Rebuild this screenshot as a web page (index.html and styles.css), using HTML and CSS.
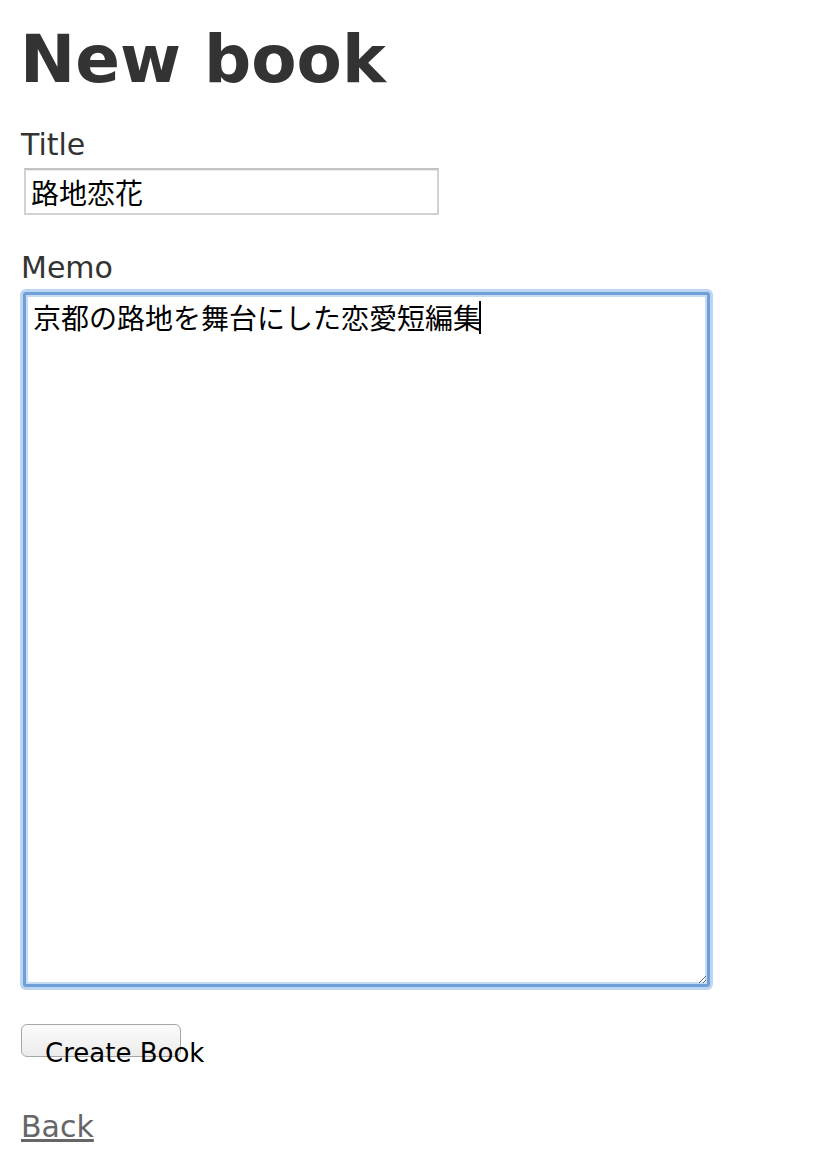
FILE: index.html
```html
<!DOCTYPE html>
<html lang="ja">
<head>
<meta charset="utf-8">
<title>New book</title>
<link rel="stylesheet" href="styles.css">
</head>
<body>
<h1 class="page-title">New book</h1>
<form class="book-form">
  <div class="field">
    <label class="field-label" for="book_title">Title</label>
    <input class="text-input" id="book_title" type="text" value="路地恋花">
  </div>
  <div class="field field-memo">
    <label class="field-label" for="book_memo">Memo</label>
    <div class="memo-wrap">
      <textarea class="memo-input" id="book_memo">京都の路地を舞台にした恋愛短編集</textarea>
      <span class="caret"></span>
    </div>
  </div>
  <div class="actions">
    <button class="submit-btn" type="button"><span class="submit-text">Create Book</span></button>
  </div>
</form>
<a class="back-link" href="#">Back</a>
</body>
</html>
```
FILE: styles.css
```css
html, body {
  margin: 0;
  padding: 0;
  background: #fff;
}
body {
  padding: 0 21px;
  font-family: "DejaVu Sans", Verdana, sans-serif;
  color: #333;
}
.page-title {
  margin: 20px 0 0 -1px;
  font-size: 66px;
  line-height: 80px;
  font-weight: bold;
  color: #333;
}
.book-form {
  margin: 0;
}
.field {
  display: flex;
  flex-direction: column;
  align-items: flex-start;
}
.field-label {
  margin-top: 27px;
  font-size: 30px;
  line-height: 36px;
  color: #333;
}
.field-memo .field-label {
  margin-top: 35px;
}
.text-input {
  box-sizing: border-box;
  margin: 5px 0 0 3px;
  width: 415px;
  height: 47px;
  padding: 0 5px;
  border: 2px solid #d2d2d2;
  border-top-color: #c2c2c2;
  box-shadow: inset 0 1px 0 #ececec;
  font-family: "Noto Sans CJK JP", sans-serif;
  font-size: 28px;
  color: #000;
  outline: none;
  background: #fff;
}
.memo-wrap {
  position: relative;
  margin: 6px 0 0 2px;
}
.memo-input {
  display: block;
  box-sizing: border-box;
  width: 687px;
  height: 695px;
  margin: 0;
  padding: 2px 7px;
  border: 3px solid #6f9fd6;
  box-shadow: 0 0 0 3px #bcd5f1, inset 0 0 0 2px #c6dcf4;
  border-radius: 3px;
  font-family: "Noto Sans CJK JP", sans-serif;
  font-size: 28px;
  line-height: 40px;
  color: #000;
  outline: none;
  background: #fff;
}
.caret {
  position: absolute;
  left: 456px;
  top: 9px;
  width: 2px;
  height: 33px;
  background: #000;
}
.actions {
  margin-top: 37px;
}
.submit-btn {
  display: flex;
  align-items: flex-start;
  box-sizing: border-box;
  width: 160px;
  height: 33px;
  margin: 0;
  padding: 15px 0 0 23px;
  border: 1px solid #a6a6a6;
  border-radius: 6px;
  background: linear-gradient(#fbfbfb, #ececec);
  overflow: visible;
  font-family: "DejaVu Sans", Verdana, sans-serif;
  font-size: 26px;
  line-height: 26px;
  color: #000;
  white-space: nowrap;
}
.submit-text {
  display: block;
}
.back-link {
  display: inline-block;
  margin-top: 52px;
  font-size: 30px;
  line-height: 36px;
  color: #666;
  text-decoration: underline;
}
```
